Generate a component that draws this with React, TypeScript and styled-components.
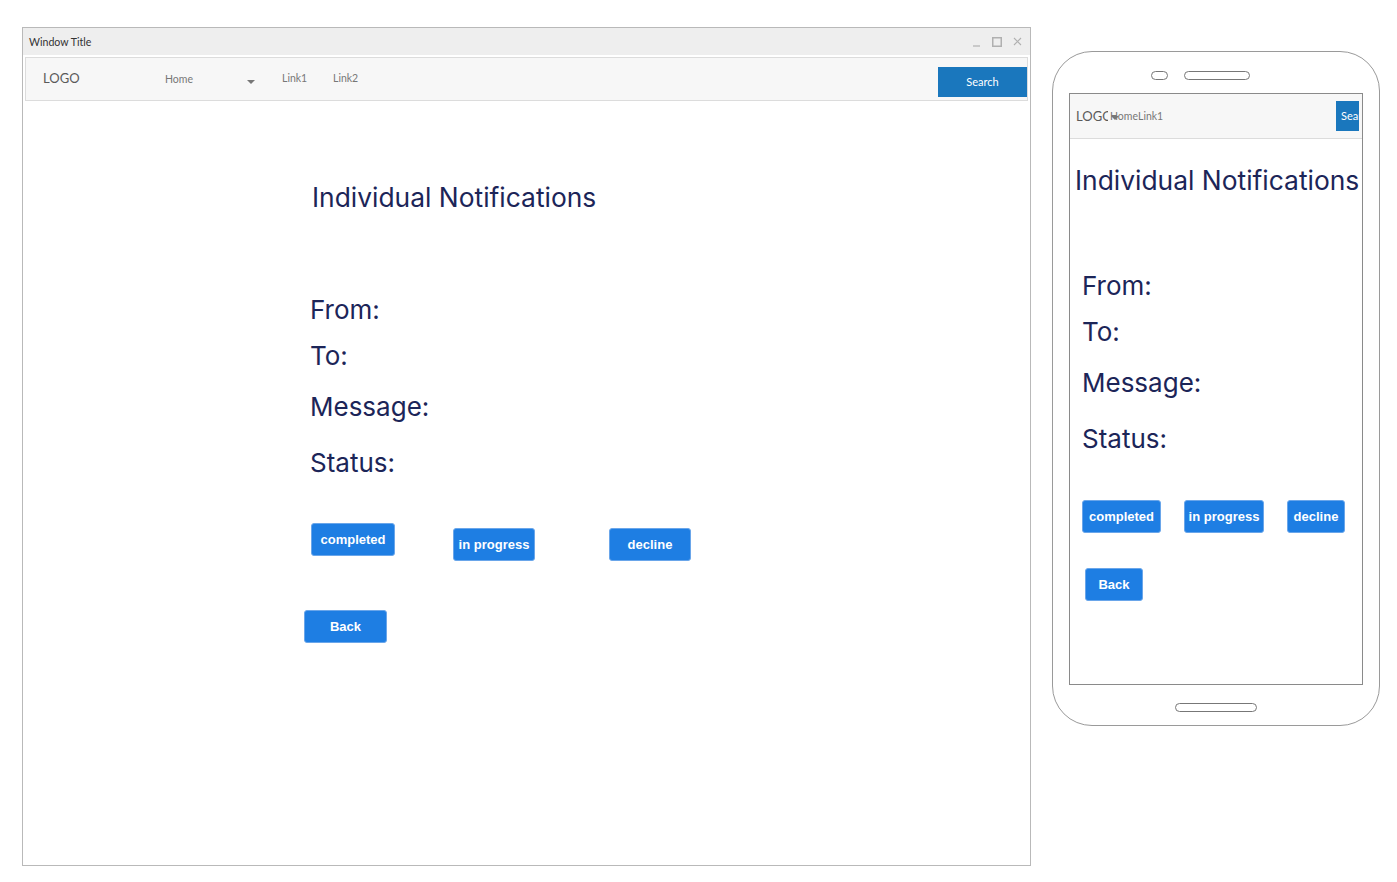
import React from "react";
import styled, { createGlobalStyle } from "styled-components";

const GlobalStyle = createGlobalStyle`
  html, body { margin: 0; padding: 0; background: #ffffff; }
  body { font-family: "Inter", "Liberation Sans", sans-serif; }
  * { box-sizing: border-box; }
`;

const Page = styled.div`
  display: flex;
  align-items: flex-start;
  gap: 21px;
  padding: 27px 0 0 22px;
  width: 1397px;
  height: 882px;
`;

/* ---------- Desktop window ---------- */
const Window = styled.div`
  width: 1009px;
  height: 839px;
  border: 1px solid #b9b9b9;
  background: #ffffff;
  display: flex;
  flex-direction: column;
`;

const TitleBar = styled.div`
  height: 27px;
  background: #eeeeee;
  display: flex;
  align-items: center;
  justify-content: space-between;
  padding: 0 8px 0 6px;
  font-family: "Lato", "Liberation Sans", sans-serif;
  font-size: 10.6px;
  color: #333333;
`;

const WindowControls = styled.div`
  display: flex;
  align-items: center;
  gap: 11px;
  color: #b0b0b0;
`;

const NavBar = styled.div<{ $compact?: boolean }>`
  display: flex;
  align-items: ${(p) => (p.$compact ? "center" : "flex-start")};
  height: ${(p) => (p.$compact ? "45px" : "44px")};
  margin: ${(p) => (p.$compact ? "0" : "2px 2px 0 2px")};
  background: #f7f7f7;
  border: 1px solid #dcdcdc;
  border-width: ${(p) => (p.$compact ? "0 0 1px 0" : "1px")};
  font-family: "Lato", "Liberation Sans", sans-serif;
  overflow: hidden;
  flex-shrink: 0;
`;

const Logo = styled.div<{ $width: number; $pad: number; $top?: number }>`
  flex: 0 0 ${(p) => p.$width}px;
  padding-left: ${(p) => p.$pad}px;
  margin-top: ${(p) => p.$top ?? 0}px;
  font-size: 13px;
  color: #5a5a5a;
  white-space: nowrap;
  overflow: hidden;
`;

const LogoClip = styled.div<{ $width: number }>`
  width: ${(p) => p.$width}px;
  overflow: hidden;
`;

const NavItem = styled.div<{ $width: number; $top?: number }>`
  position: relative;
  flex: 0 0 ${(p) => p.$width}px;
  margin-top: ${(p) => p.$top ?? 0}px;
  font-size: 10.5px;
  color: #777777;
  white-space: nowrap;
`;

const Caret = styled.span<{ $left: number; $top: number }>`
  position: absolute;
  left: ${(p) => p.$left}px;
  top: ${(p) => p.$top}px;
  width: 0;
  height: 0;
  border-left: 4px solid transparent;
  border-right: 4px solid transparent;
  border-top: 4px solid #777777;
`;

const Spacer = styled.div`
  flex: 1;
`;

const SearchButton = styled.div<{ $width: number; $top?: number; $pad: number }>`
  flex: 0 0 ${(p) => p.$width}px;
  height: 30px;
  margin-top: ${(p) => p.$top ?? 0}px;
  margin-right: ${(p) => (p.$pad ? 3 : 0)}px;
  background: #1a77bd;
  color: #ffffff;
  font-size: 11px;
  line-height: 30px;
  text-align: ${(p) => (p.$pad ? "left" : "center")};
  padding-left: ${(p) => p.$pad}px;
  overflow: hidden;
  white-space: nowrap;
`;

const Content = styled.div<{ $padLeft: number }>`
  display: flex;
  flex-direction: column;
  align-items: flex-start;
  padding-left: ${(p) => p.$padLeft}px;
`;

const Heading = styled.h1<{ $top: number; $left: number }>`
  margin: ${(p) => p.$top}px 0 0 ${(p) => p.$left}px;
  font-family: "Inter", sans-serif;
  font-weight: 400;
  font-size: 26.4px;
  line-height: 1;
  color: #1c2558;
  white-space: nowrap;
`;

const Label = styled.div<{ $top: number }>`
  margin-top: ${(p) => p.$top}px;
  font-family: "Inter", sans-serif;
  font-size: 26px;
  line-height: 1;
  color: #1c2558;
`;

const ButtonRow = styled.div<{ $top: number }>`
  display: flex;
  align-items: flex-start;
  margin-top: ${(p) => p.$top}px;
`;

const ActionButton = styled.button<{ $width: number; $left?: number; $top?: number; $h?: number }>`
  width: ${(p) => p.$width}px;
  height: ${(p) => p.$h ?? 33}px;
  padding: 0;
  margin-left: ${(p) => p.$left ?? 0}px;
  margin-top: ${(p) => p.$top ?? 0}px;
  background: #1e7ee3;
  border: 1px solid #6aa6ea;
  border-radius: 3px;
  color: #ffffff;
  font-family: "Liberation Sans", Arial, sans-serif;
  font-weight: 700;
  font-size: 13px;
  white-space: nowrap;
  cursor: pointer;
`;

/* ---------- Phone ---------- */
const Phone = styled.div`
  margin-top: 24px;
  width: 328px;
  height: 675px;
  border: 1px solid #9a9a9a;
  border-radius: 40px;
  display: flex;
  flex-direction: column;
  align-items: center;
`;

const Earpiece = styled.div`
  display: flex;
  align-items: center;
  gap: 16px;
  height: 41px;
  padding-top: 5px;
  margin-left: -32px;
`;

const Pill = styled.div<{ $width: number }>`
  width: ${(p) => p.$width}px;
  height: 9px;
  border: 1px solid #777777;
  border-radius: 5px;
`;

const Screen = styled.div`
  width: 294px;
  height: 592px;
  border: 1px solid #8a8a8a;
  display: flex;
  flex-direction: column;
  overflow: hidden;
`;

const HomeBar = styled.div`
  margin-top: 18px;
  width: 82px;
  height: 9px;
  border: 1px solid #777777;
  border-radius: 5px;
`;

const Minimize = () => (
  <svg width="8" height="10" viewBox="0 0 8 10">
    <line x1="0" y1="9" x2="7" y2="9" stroke="currentColor" strokeWidth="1.2" />
  </svg>
);
const Maximize = () => (
  <svg width="10" height="10" viewBox="0 0 10 10">
    <rect x="0.75" y="0.75" width="8.5" height="8.5" fill="none" stroke="currentColor" strokeWidth="1.5" />
  </svg>
);
const Close = () => (
  <svg width="9" height="9" viewBox="0 0 9 9">
    <path d="M1 1 L8 8 M8 1 L1 8" stroke="currentColor" strokeWidth="1.1" />
  </svg>
);

export default function App() {
  return (
    <>
      <GlobalStyle />
      <Page>
        <Window>
          <TitleBar>
            <span>Window Title</span>
            <WindowControls>
              <Minimize />
              <Maximize />
              <Close />
            </WindowControls>
          </TitleBar>
          <NavBar>
            <Logo $width={139} $pad={17} $top={12}>LOGO</Logo>
            <NavItem $width={117} $top={15}>
              Home
              <Caret $left={82} $top={7} />
            </NavItem>
            <NavItem $width={51} $top={14}>Link1</NavItem>
            <NavItem $width={40} $top={14}>Link2</NavItem>
            <Spacer />
            <SearchButton $width={89} $top={9} $pad={0}>Search</SearchButton>
          </NavBar>
          <Content $padLeft={287}>
            <Heading $top={83} $left={2}>Individual Notifications</Heading>
            <Label $top={87}>From:</Label>
            <Label $top={20}>To:</Label>
            <Label $top={25}>Message:</Label>
            <Label $top={30}>Status:</Label>
            <ButtonRow $top={47}>
              <ActionButton $width={84} $left={1}>completed</ActionButton>
              <ActionButton $width={82} $left={58} $top={5}>in progress</ActionButton>
              <ActionButton $width={82} $left={74} $top={5}>decline</ActionButton>
            </ButtonRow>
            <ButtonRow $top={49}>
              <ActionButton $width={83} $left={-6}>Back</ActionButton>
            </ButtonRow>
          </Content>
        </Window>

        <Phone>
          <Earpiece>
            <Pill $width={17} />
            <Pill $width={66} />
          </Earpiece>
          <Screen>
            <NavBar $compact>
              <Logo $width={40} $pad={6}>
                <LogoClip $width={32}>LOGO</LogoClip>
              </Logo>
              <NavItem $width={27}>
                Home
                <Caret $left={1} $top={6} />
              </NavItem>
              <NavItem $width={30}>Link1</NavItem>
              <Spacer />
              <SearchButton $width={23} $pad={5}>Search</SearchButton>
            </NavBar>
            <Content $padLeft={12}>
              <Heading $top={28} $left={-7}>Individual Notifications</Heading>
              <Label $top={80}>From:</Label>
              <Label $top={20}>To:</Label>
              <Label $top={25}>Message:</Label>
              <Label $top={30}>Status:</Label>
              <ButtonRow $top={48}>
                <ActionButton $width={79} $h={33} $left={0}>completed</ActionButton>
                <ActionButton $width={80} $h={33} $left={23}>in progress</ActionButton>
                <ActionButton $width={58} $h={33} $left={23}>decline</ActionButton>
              </ButtonRow>
              <ButtonRow $top={35}>
                <ActionButton $width={58} $left={3}>Back</ActionButton>
              </ButtonRow>
            </Content>
          </Screen>
          <HomeBar />
        </Phone>
      </Page>
    </>
  );
}
